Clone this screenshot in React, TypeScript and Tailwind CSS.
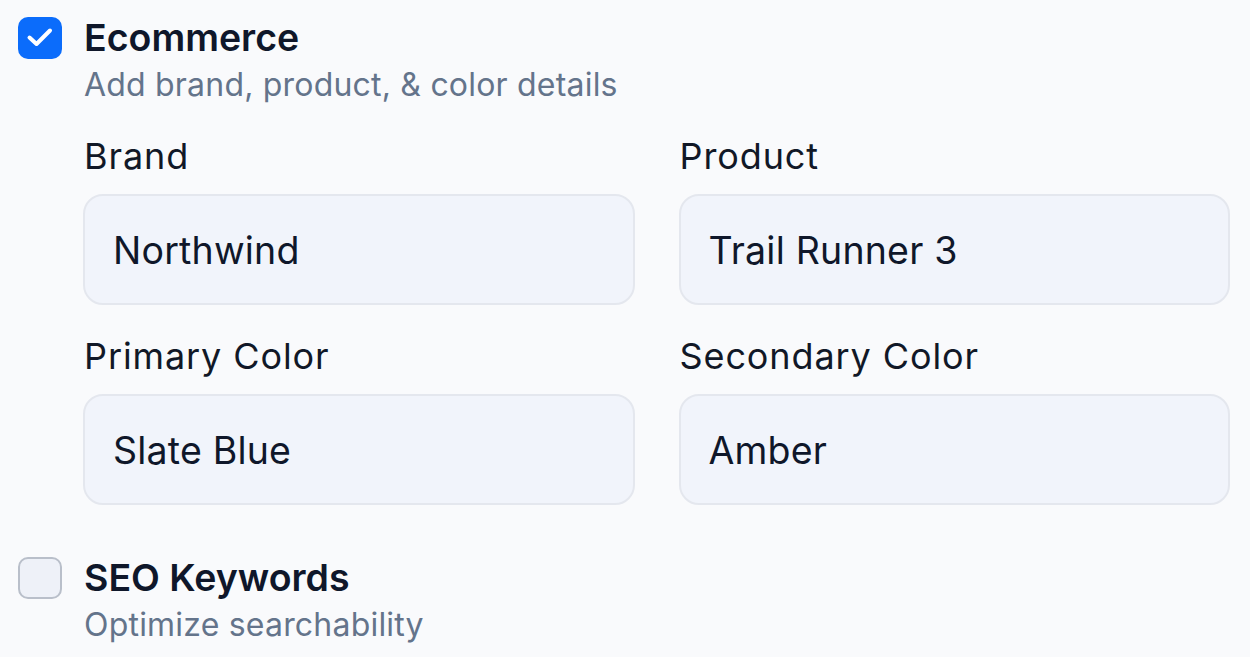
import React from "react";

const font = { fontFamily: "Inter, 'Noto Sans', sans-serif" };

function CheckBox({ checked }: { checked: boolean }) {
  if (checked) {
    return (
      <span className="mt-[1px] flex h-[42px] w-[44px] shrink-0 items-center justify-center rounded-[10px] bg-[#0b6cfb]">
        <svg viewBox="0 0 44 42" className="h-[42px] w-[44px]" fill="none">
          <path d="M11.5 20.5 L18.5 27 L32 13.5" stroke="white" strokeWidth="4" strokeLinecap="round" strokeLinejoin="round" />
        </svg>
      </span>
    );
  }
  return <span className="mt-[1px] block h-[42px] w-[44px] shrink-0 rounded-[10px] border-2 border-[#b9bfca] bg-[#eef1f8]" />;
}

function Field({ label, value }: { label: string; value: string }) {
  return (
    <div className="flex flex-col">
      <label className="pl-px text-[36px] leading-[40px] tracking-[0.9px] text-[#111827]">{label}</label>
      <div className="mt-[18px] flex h-[111px] items-center rounded-[20px] border-2 border-[#e4e7ee] bg-[#f1f4fb] px-[28px] pt-[3px] text-[37.5px] tracking-[0.2px] text-[#0f172a]">
        {value}
      </div>
    </div>
  );
}

function Section({
  checked,
  title,
  subtitle,
  children,
}: {
  checked: boolean;
  title: string;
  subtitle: string;
  children?: React.ReactNode;
}) {
  return (
    <div className="flex gap-[21px]">
      <CheckBox checked={checked} />
      <div className="flex-1">
        <div className="pl-px text-[37.5px] font-semibold leading-[44px] text-[#0f172a]">{title}</div>
        <div className="mt-[5px] pl-px text-[32px] leading-[40px] tracking-[0.2px] text-[#64748b]">{subtitle}</div>
        {children}
      </div>
    </div>
  );
}

export default function App() {
  return (
    <div className="h-[657px] w-[1250px] overflow-hidden bg-[#f9fafc] pt-4 pl-[18px] pr-5" style={font}>
      <Section checked title="Ecommerce" subtitle="Add brand, product, & color details">
        <div className="mt-[31px] grid grid-cols-2 gap-x-[44px] gap-y-[31px]">
          <Field label="Brand" value="Northwind" />
          <Field label="Product" value="Trail Runner 3" />
          <Field label="Primary Color" value="Slate Blue" />
          <Field label="Secondary Color" value="Amber" />
        </div>
      </Section>
      <div className="mt-[51px]">
        <Section checked={false} title="SEO Keywords" subtitle="Optimize searchability" />
      </div>
    </div>
  );
}
